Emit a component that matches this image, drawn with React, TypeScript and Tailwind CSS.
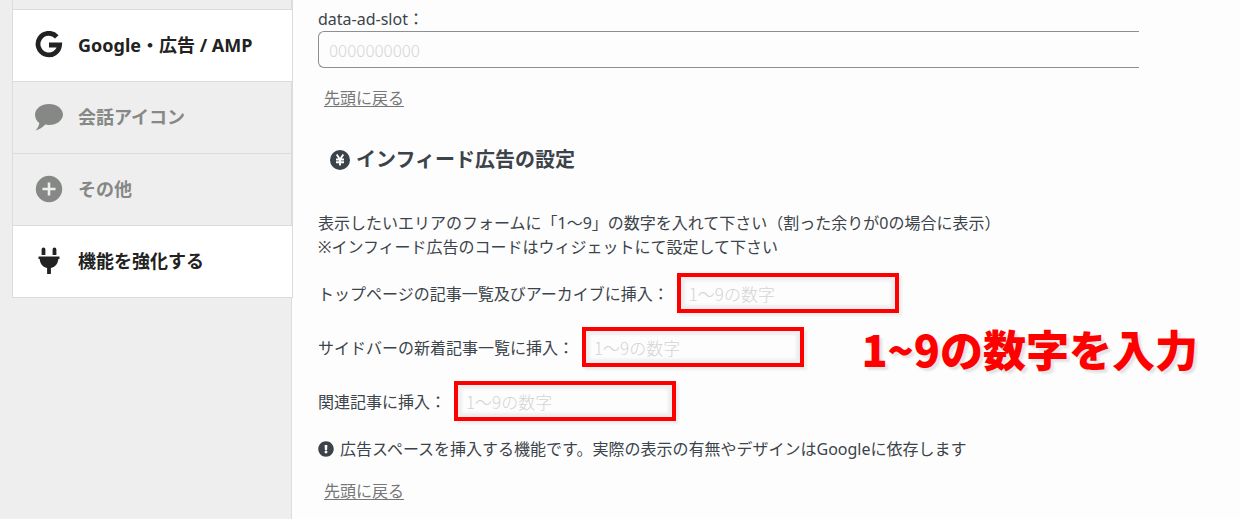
import type { ReactNode } from "react";
import { FaExclamationCircle } from "react-icons/fa";

function Glyph({ children }: { children: ReactNode }) {
  return (
    <svg viewBox="0 0 28 28" className="h-7 w-7 shrink-0" fill="currentColor" aria-hidden="true">
      {children}
    </svg>
  );
}

const googleIcon = (
  <Glyph>
    <path
      d="M21.8 5.8A10.8 10.8 0 1 0 24.6 14H14"
      fill="none"
      stroke="currentColor"
      strokeWidth="4.8"
    />
  </Glyph>
);

const commentIcon = (
  <Glyph>
    <path d="M28 11.5c0 5.8-6.3 10.5-14 10.500-1.300 0-2.600-.1-3.800-.4C7.600 24.600 4.300 26.700.6 27.400c1.900-2 3.500-4.400 3.700-7.300C1.700 18.200 0 15 0 11.500 0 5.700 6.300 1 14 1s14 4.700 14 10.500z" />
  </Glyph>
);

const plusIcon = (
  <Glyph>
    <circle cx="14" cy="14" r="13.2" />
    <path d="M14 7.5v13M7.5 14h13" stroke="#eeeeee" strokeWidth="2.6" />
  </Glyph>
);

const plugIcon = (
  <Glyph>
    <path d="M6.600 2.500a1.900 1.900 0 0 1 3.800 0V8H6.600zM17.600 2.500a1.900 1.900 0 0 1 3.800 0V8h-3.800zM3.500 9.500h21V12h-1.200c-.3 4.700-3.200 8.200-7.400 9V27h-3.800v-6c-4.200-.8-7.100-4.300-7.400-9H3.500z" />
  </Glyph>
);

const menuItems = [
  { icon: googleIcon, label: "Google・広告 / AMP", active: true },
  { icon: commentIcon, label: "会話アイコン", active: false },
  { icon: plusIcon, label: "その他", active: false },
  { icon: plugIcon, label: "機能を強化する", active: true },
];

const feedFields = [
  { id: "feed-archive", label: "トップページの記事一覧及びアーカイブに挿入：" },
  { id: "feed-sidebar", label: "サイドバーの新着記事一覧に挿入：" },
  { id: "feed-related", label: "関連記事に挿入：" },
];

function YenIcon() {
  return (
    <svg viewBox="0 0 20 20" className="w-5 h-5" aria-hidden="true">
      <circle cx="10" cy="10" r="10" fill="currentColor" />
      <path
        d="M6.7 4.5l3.3 5 3.3-5M10 9.5v6M6 9.5h8M6 12.3h8"
        fill="none"
        stroke="#fdfdfd"
        strokeWidth="1.9"
      />
    </svg>
  );
}

function BackLink() {
  return (
    <div className="mt-[18px] leading-6">
      <a href="#top" className="ml-1.5 text-[#777777] underline underline-offset-2">
        先頭に戻る
      </a>
    </div>
  );
}

function MenuItem({ active, children }: { active: boolean; children: ReactNode }) {
  return (
    <li
      className={`-mr-[2px] h-[72px] border-l border-r border-b border-[#dcdcdc] ${
        active ? "bg-white text-[#222222]" : "text-[#868886]"
      }`}
    >
      <a href="#menu" className="flex h-full items-center gap-[15px] pb-0.5 pl-[22px] text-lg font-bold">
        {children}
      </a>
    </li>
  );
}

export default function App() {
  return (
    <div className="relative flex min-h-screen bg-[#fdfdfd] text-base text-[#3c434a] font-['Noto_Sans','Noto_Sans_CJK_JP',sans-serif]">
      <aside className="w-[292px] shrink-0 border-r border-[#dcdcdc] bg-[#eeeeee] pl-3">
        <ul>
          <li className="-mr-[2px] h-[10px] border-l border-r border-b border-[#dcdcdc]" />
          {menuItems.map((item) => (
            <MenuItem key={item.label} active={item.active}>
              {item.icon}
              {item.label}
            </MenuItem>
          ))}
        </ul>
      </aside>

      <main className="min-w-0 flex-1 pl-[26px] pt-[7px] pr-[101px]">
        <label htmlFor="ad-slot" className="block leading-6">
          data-ad-slot：
        </label>
        <input
          id="ad-slot"
          type="text"
          placeholder="0000000000"
          className="block h-[37px] w-full rounded-l-md border border-r-0 border-[#8c8f94] bg-[#fdfdfd] px-2.5 text-[17px] font-light placeholder:text-[#d4d8d4] font-['Noto_Sans_CJK_JP',sans-serif]"
        />
        <BackLink />

        <h2 className="mt-9 ml-3 flex items-center gap-1.5 text-xl font-bold leading-7">
          <YenIcon />
          インフィード広告の設定
        </h2>

        <p className="mt-[37px] leading-6">
          表示したいエリアのフォームに「1～9」の数字を入れて下さい（割った余りが0の場合に表示）
          <br />
          ※インフィード広告のコードはウィジェットにて設定して下さい
        </p>

        <div className="mt-[14px] flex flex-col gap-3.5">
          {feedFields.map((field) => (
            <div key={field.id} className="flex items-center gap-2">
              <label htmlFor={field.id} className="pt-0.5">
                {field.label}
              </label>
              <input
                id={field.id}
                type="text"
                placeholder="1～9の数字"
                className="h-10 w-[222px] border-4 border-[#ff0000] bg-[#fdfdfd] px-2 text-[17px] font-light shadow-[inset_0_0_3px_4px_#eeeeee,3px_3px_2px_#eeeeee] placeholder:text-[#d4d4d4] font-['Noto_Sans_CJK_JP',sans-serif]"
              />
            </div>
          ))}
        </div>

        <p className="mt-4 flex items-center gap-1.5 leading-6">
          <FaExclamationCircle className="h-4 w-4" />
          広告スペースを挿入する機能です。実際の表示の有無やデザインはGoogleに依存します
        </p>
        <BackLink />
      </main>

      {/* callout over the form */}
      <p className="absolute right-[42px] top-[317px] whitespace-nowrap text-[43px] font-black leading-[62px] text-[#ff0000] font-['Noto_Sans_CJK_JP',sans-serif] [text-shadow:3px_3px_2px_#e4e4e4]">
        1~9の数字を入力
      </p>
    </div>
  );
}
